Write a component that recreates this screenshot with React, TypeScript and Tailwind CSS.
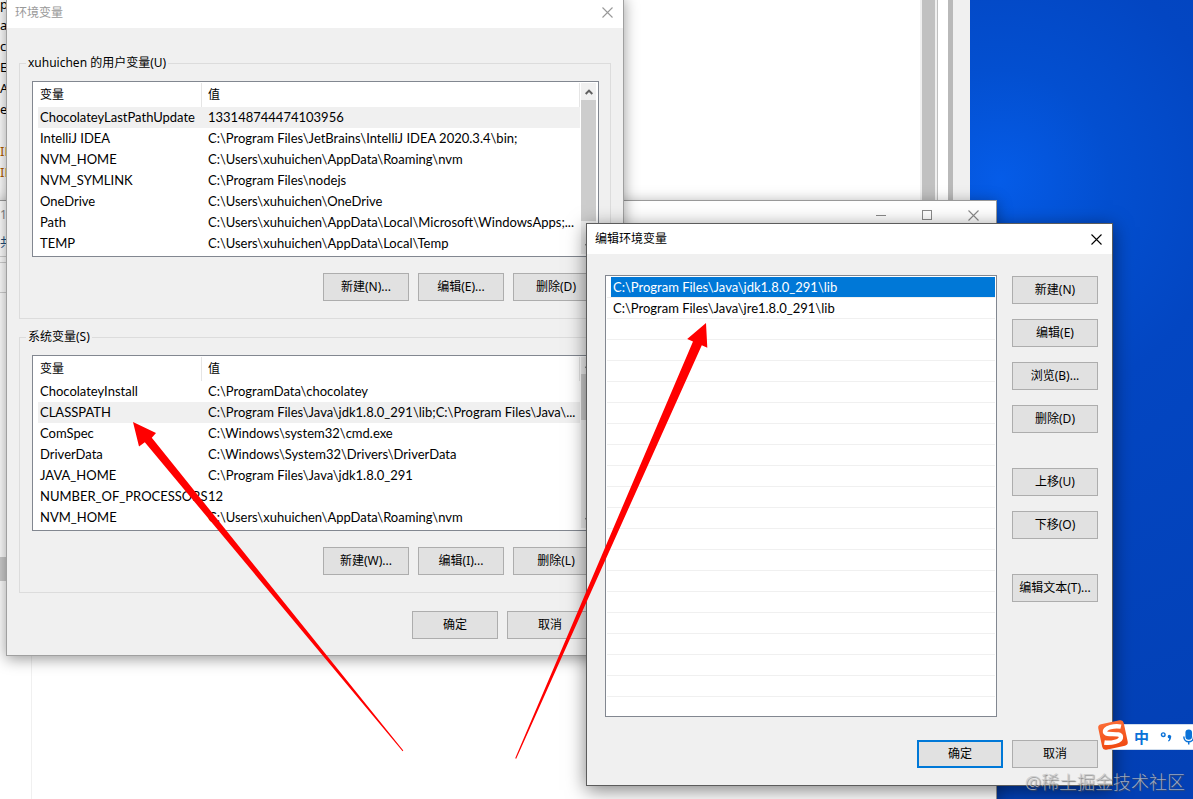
import React from "react";

const FONT = "font-['Noto_Sans','Noto_Sans_CJK_SC',sans-serif]";

type Row = [string, string];

const userVars: Row[] = [
  ["ChocolateyLastPathUpdate", "133148744474103956"],
  ["IntelliJ IDEA", "C:\\Program Files\\JetBrains\\IntelliJ IDEA 2020.3.4\\bin;"],
  ["NVM_HOME", "C:\\Users\\xuhuichen\\AppData\\Roaming\\nvm"],
  ["NVM_SYMLINK", "C:\\Program Files\\nodejs"],
  ["OneDrive", "C:\\Users\\xuhuichen\\OneDrive"],
  ["Path", "C:\\Users\\xuhuichen\\AppData\\Local\\Microsoft\\WindowsApps;..."],
  ["TEMP", "C:\\Users\\xuhuichen\\AppData\\Local\\Temp"],
];

const systemVars: Row[] = [
  ["ChocolateyInstall", "C:\\ProgramData\\chocolatey"],
  ["CLASSPATH", "C:\\Program Files\\Java\\jdk1.8.0_291\\lib;C:\\Program Files\\Java\\..."],
  ["ComSpec", "C:\\Windows\\system32\\cmd.exe"],
  ["DriverData", "C:\\Windows\\System32\\Drivers\\DriverData"],
  ["JAVA_HOME", "C:\\Program Files\\Java\\jdk1.8.0_291"],
  ["NUMBER_OF_PROCESSORS", "12"],
  ["NVM_HOME", "C:\\Users\\xuhuichen\\AppData\\Roaming\\nvm"],
];

const editorPaths = [
  "C:\\Program Files\\Java\\jdk1.8.0_291\\lib",
  "C:\\Program Files\\Java\\jre1.8.0_291\\lib",
];

const sideButtons = [
  ["新建(N)", "编辑(E)", "浏览(B)...", "删除(D)"],
  ["上移(U)", "下移(O)"],
  ["编辑文本(T)..."],
];

const browserLines = ["p", "a", "c", "E", "A", "ea", ""];

function Button({ children, primary = false }: { children: React.ReactNode; primary?: boolean }) {
  return (
    <button
      type="button"
      className={
        primary
          ? "flex h-7 w-[86px] shrink-0 items-center justify-center whitespace-nowrap border-2 border-[#0078d7] bg-[#e1e1e1] text-xs text-black"
          : "flex h-7 w-[86px] shrink-0 items-center justify-center whitespace-nowrap border border-[#adadad] bg-[#e1e1e1] text-xs text-black"
      }
    >
      {children}
    </button>
  );
}

function CloseButton({ label, className }: { label: string; className: string }) {
  return (
    <button type="button" aria-label={label} className={className}>
      <svg width="11" height="11" viewBox="0 0 11 11" fill="none" stroke="currentColor" strokeWidth="1.1">
        <path d="M0.5 0.5 10.5 10.5M10.5 0.5 0.5 10.5" />
      </svg>
    </button>
  );
}

function Chevron({ down = false }: { down?: boolean }) {
  return (
    <svg width="8" height="6" viewBox="0 0 8 6" fill="none" stroke="#606060" strokeWidth="2">
      {down ? <path d="M0.7 1 4 4.4 7.3 1" /> : <path d="M0.7 5 4 1.6 7.3 5" />}
    </svg>
  );
}

function VariableList({ rows, selected, thumb }: { rows: Row[]; selected: number; thumb: string }) {
  return (
    <div className="flex border border-[#828790] bg-white px-px pt-px pb-0.5">
      <div className="min-w-0 flex-1">
        <table className="w-full table-fixed border-separate border-spacing-0 font-['Lato','Noto_Sans_CJK_SC',sans-serif] text-[13px] leading-[21px]">
          <colgroup>
            <col className="w-1" />
            <col className="w-[164px]" />
            <col />
          </colgroup>
          <thead>
            <tr className="h-6 text-xs">
              <td className="p-0" />
              <th scope="col" className="border-r border-[#e5e5e5] p-0 pl-0.5 text-left font-normal">变量</th>
              <th scope="col" className="border-r border-[#e5e5e5] p-0 pl-1.5 text-left font-normal">值</th>
            </tr>
          </thead>
          <tbody>
            {rows.map(([name, value], i) => (
              <tr key={name} className="h-[21px]">
                <td className="p-0" />
                <td className={i === selected ? "whitespace-nowrap bg-[#f0f0f0] p-0 pl-0.5" : "whitespace-nowrap p-0 pl-0.5"}>{name}</td>
                <td className={i === selected ? "whitespace-nowrap bg-[#f0f0f0] p-0 pl-1.5" : "whitespace-nowrap p-0 pl-1.5"}>{value}</td>
              </tr>
            ))}
          </tbody>
        </table>
      </div>
      <div className="mr-px flex w-4 flex-col items-center border-l border-white bg-[#f0f0f0]">
        <div className="flex h-[17px] items-center justify-center"><Chevron /></div>
        <div className={thumb} />
        <div className="mt-auto flex h-[17px] items-center justify-center"><Chevron down /></div>
      </div>
    </div>
  );
}

function Group({ title, children }: { title: string; children: React.ReactNode }) {
  return (
    <fieldset className="min-w-0 border border-[#dcdcdc] pr-[11px] pb-[17px] pl-3">
      <legend className="-ml-1.5 px-0.5 text-xs leading-4">{title}</legend>
      {children}
    </fieldset>
  );
}

function Arrows() {
  return (
    <svg className="pointer-events-none absolute top-0 left-0" width="720" height="799" viewBox="0 0 720 799" fill="#ff0000" aria-hidden="true">
      <path d="M133 422 156 433 151.8 437.8 403.3 750.6 402.6 751.2 144.8 442.3 139 446.5Z" />
      <path d="M706 323 707.3 347.8 701.8 345.2 516.2 758.7 515.2 758.2 693 341.4 687.2 339Z" />
    </svg>
  );
}

function InputMethodBar() {
  return (
    <div className="absolute top-[724px] right-0 flex h-[26px] w-[84px] items-center border-y border-[#cfdcec] bg-white text-[#0a72d8]">
      <svg className="absolute -top-[7px] -left-[13px]" width="34" height="34" viewBox="0 0 34 34" aria-hidden="true">
        <defs>
          <linearGradient id="logo" x1="0" y1="0" x2="0" y2="1">
            <stop offset="0" stopColor="#fb6b35" />
            <stop offset="1" stopColor="#f04a12" />
          </linearGradient>
        </defs>
        <g transform="rotate(-12 17 17)">
          <rect x="4" y="4" width="26" height="26" rx="3.5" fill="url(#logo)" />
          <path d="M26.5 10.5C21 8 10 7.8 9.8 12.3 9.6 16.6 24.8 15.5 24.4 20.3 23.9 25.4 12.5 24.7 7 22.5" fill="none" stroke="#fff" strokeWidth="4.4" />
        </g>
      </svg>
      <span className="ml-[25px] text-[15px] leading-6 font-bold">中</span>
      <svg className="ml-2.5" width="36" height="24" viewBox="0 0 36 24" aria-hidden="true">
        <circle cx="4.5" cy="9.5" r="1.9" fill="none" stroke="currentColor" strokeWidth="1.5" />
        <path d="M9.2 11.5a1.9 1.9 0 1 1 3.6 1C12.6 14.6 11.6 16 10 16.8L9.5 15.9C10.4 15.3 10.8 14.5 10.8 13.6A1.9 1.9 0 0 1 9.2 11.5Z" fill="currentColor" />
        <rect x="28" y="4" width="7" height="11" rx="3.5" fill="currentColor" />
        <path d="M26.3 11.5C26.3 19 36.7 19 36.7 11.5M31.5 17V20" fill="none" stroke="currentColor" strokeWidth="1.6" />
      </svg>
    </div>
  );
}

export default function App() {
  return (
    <div className={`${FONT} relative h-screen overflow-hidden bg-[radial-gradient(circle_at_1000px_180px,#055ce8_0px,#034fd0_110px,#0346c2_230px,#0340b5_620px)] text-black`}>
      {/* Browser window at the back */}
      <div className="absolute top-0 left-0 flex h-[220px] w-[970px] bg-white">
        <div className="-mt-1.5 flex w-4 flex-col text-[13px] leading-[21px]">
          {browserLines.map((line, i) => (
            <span key={i} className="h-[21px]">{line}</span>
          ))}
          <span className="h-[21px] text-[#b05a00]">IF</span>
          <span className="h-[21px] text-[#b05a00]">IF</span>
        </div>
        <div className="ml-auto w-0.5 bg-[#f0f0f0]" />
        <div className="w-[13px] bg-[#c1c1c1]" />
        <div className="w-0.5 bg-[#f0f0f0]" />
        <div className="w-px bg-[#c0c0c0]" />
        <div className="w-2.5" />
        <div className="w-[5px] bg-[#b9b9b9]" />
        <div className="w-[17px] bg-[#f0f0f0]" />
      </div>

      {/* Explorer window */}
      <div className="absolute top-[200px] -bottom-2 -left-1 flex w-[1001px] flex-col border border-[#9a9a9a] bg-white shadow-[0_2px_14px_rgba(0,0,0,0.35)]">
        <div className="flex h-7 items-center gap-9 pr-[17px] pl-[3px] text-[#8a8a8a]">
          <span className="mr-auto text-xs">1</span>
          <span className="h-px w-2.5 bg-current" />
          <span className="size-2.5 border border-current" />
          <CloseButton label="关闭" className="" />
        </div>
        <div className="h-7 w-5 border-b border-[#d0d0d0] pl-[3px] text-xs leading-7 text-[#1d4f7c]">共</div>
        <div className="mt-[5px] h-[31px] w-3 border-y border-[#d0d0d0]" />
        <div className="flex flex-1">
          <div className="mt-[264px] h-6 w-3 bg-[#cdcdcd]" />
          <div className="ml-[22px] border-l border-[#f0f0f0]" />
        </div>
      </div>

      {/* Environment variables dialog */}
      <section className="absolute -top-1 left-1.5 w-[618px] border border-[#a0a0a0] bg-[#f0f0f0] shadow-[0_3px_14px_rgba(0,0,0,0.4)]">
        <header className="flex h-[31px] items-center justify-between bg-white pr-2.5 pl-2 text-xs text-[#999]">
          <h1>环境变量</h1>
          <CloseButton label="关闭环境变量" className="text-[#999]" />
        </header>
        <div className="flex flex-col px-3 pt-[27px] pb-4">
          <Group title="xuhuichen 的用户变量(U)">
            <div className="pt-2.5">
              <VariableList rows={userVars} selected={0} thumb="h-[121px] w-[15px] bg-[#cdcdcd]" />
            </div>
            <div className="mt-4 flex justify-end gap-[9px]">
              <Button>新建(N)...</Button>
              <Button>编辑(E)...</Button>
              <Button>删除(D)</Button>
            </div>
          </Group>
          <div className="pt-[10px]">
            <Group title="系统变量(S)">
              <div className="pt-2.5">
                <VariableList rows={systemVars} selected={1} thumb="h-[46px] w-[15px] bg-[#cdcdcd]" />
              </div>
              <div className="mt-4 flex justify-end gap-[9px]">
                <Button>新建(W)...</Button>
                <Button>编辑(I)...</Button>
                <Button>删除(L)</Button>
              </div>
            </Group>
          </div>
          <div className="mt-[18px] mr-[18px] flex justify-end gap-[9px]">
            <Button>确定</Button>
            <Button>取消</Button>
          </div>
        </div>
      </section>

      {/* Path editor dialog */}
      <section className="absolute top-[223px] left-[586px] w-[527px] border border-[#5c5c5c] bg-[#f0f0f0] shadow-[0_4px_18px_rgba(0,0,0,0.5)]">
        <header className="flex h-[30px] items-center justify-between bg-white pr-2.5 pl-2 text-xs">
          <h2>编辑环境变量</h2>
          <CloseButton label="关闭编辑环境变量" className="" />
        </header>
        <div className="pt-[21px] pr-3.5 pb-[17px] pl-[18px]">
          <div className="flex gap-[15px]">
            <ul className="flex-1 border border-[#828790] bg-white p-px font-['Lato',sans-serif] text-[13px] leading-5">
              {Array.from({ length: 20 }, (_, i) => (
                <li key={i} className="h-[21px] border-b border-[#f0f0f0] pl-1">
                  {editorPaths[i] && (
                    <div className={i === 0 ? "bg-[#0078d7] pl-0.5 text-white" : "pl-0.5"}>{editorPaths[i]}</div>
                  )}
                </li>
              ))}
              <li className="h-[18px]" />
            </ul>
            <div className="flex flex-col gap-[35px] pt-px">
              {sideButtons.map((group) => (
                <div key={group[0]} className="flex flex-col gap-[15px]">
                  {group.map((label) => (
                    <Button key={label}>{label}</Button>
                  ))}
                </div>
              ))}
            </div>
          </div>
          <div className="mt-[23px] flex justify-end gap-[9px]">
            <Button primary>确定</Button>
            <Button>取消</Button>
          </div>
        </div>
      </section>

      <Arrows />
      <InputMethodBar />
      <p className="absolute right-2 bottom-1 text-[18px] leading-[26px] font-light whitespace-nowrap text-[#c4c4c4]/80 [text-shadow:1px_1px_1px_rgba(80,80,80,0.7)]">
        @稀土掘金技术社区
      </p>
    </div>
  );
}
